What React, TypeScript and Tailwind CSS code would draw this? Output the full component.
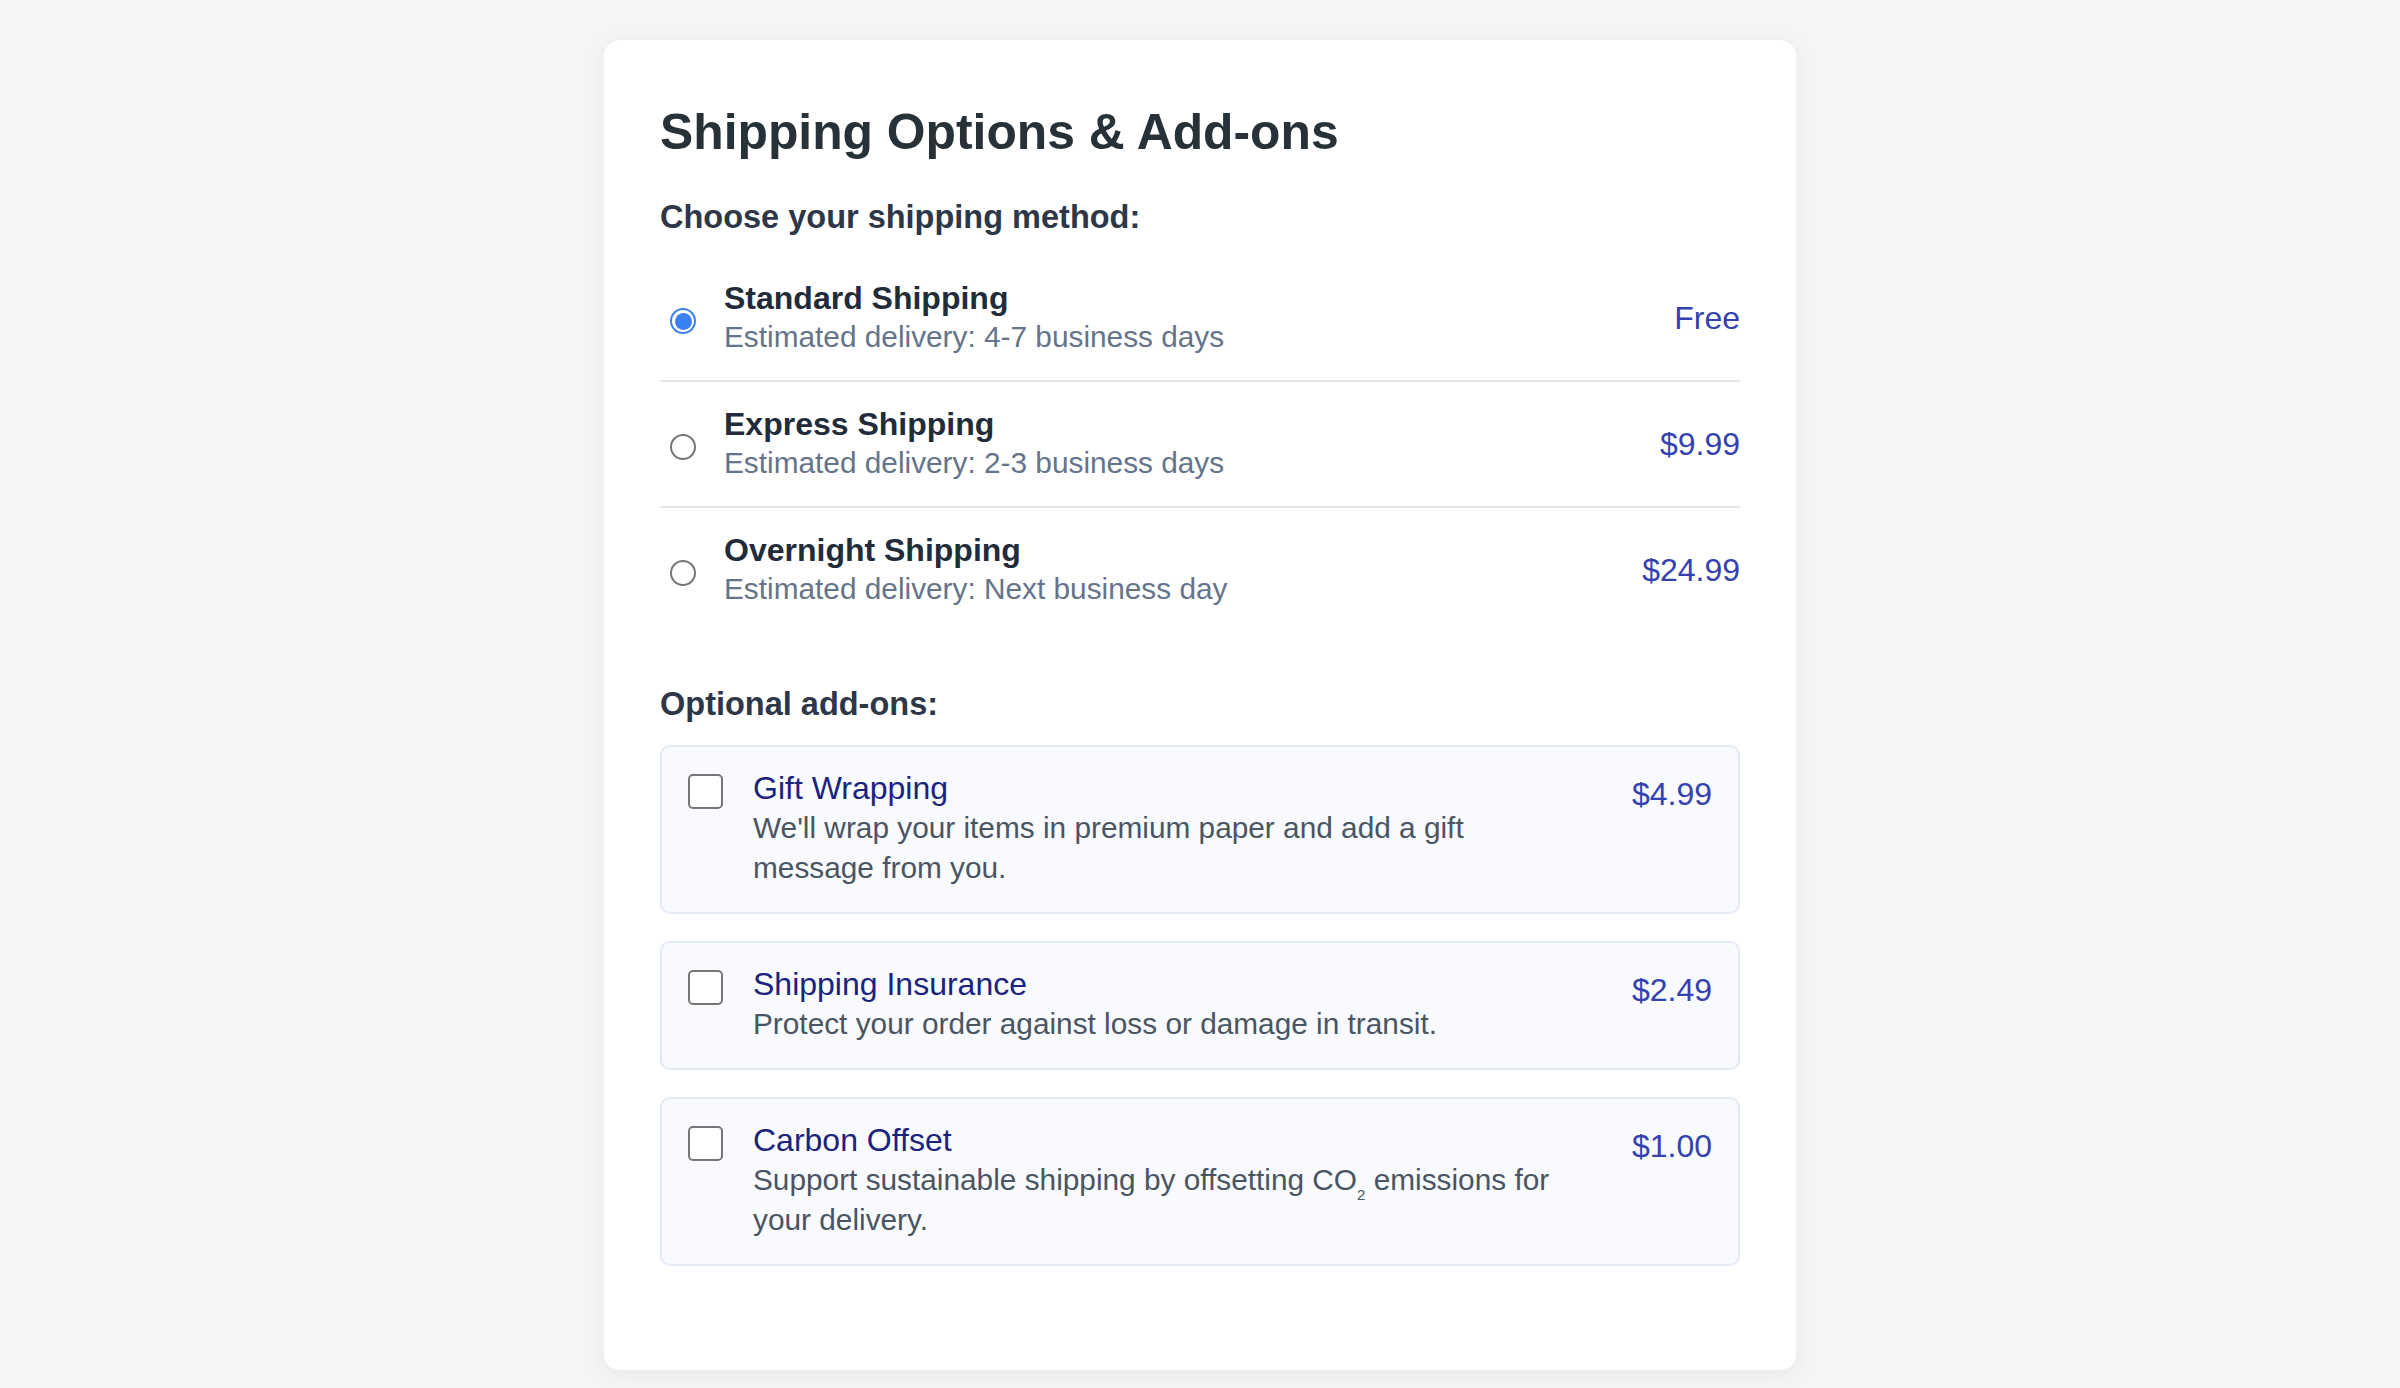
import React from "react";

const FONT = { fontFamily: '"Liberation Sans", Arial, Helvetica, sans-serif' };

type Ship = { name: string; desc: string; price: string; checked?: boolean };

const shipping: Ship[] = [
  { name: "Standard Shipping", desc: "Estimated delivery: 4-7 business days", price: "Free", checked: true },
  { name: "Express Shipping", desc: "Estimated delivery: 2-3 business days", price: "$9.99" },
  { name: "Overnight Shipping", desc: "Estimated delivery: Next business day", price: "$24.99" },
];

function Radio({ checked }: { checked?: boolean }) {
  return checked ? (
    <span className="ml-[10px] mt-[6px] mr-[28px] flex h-[26px] w-[26px] shrink-0 items-center justify-center rounded-full border-2 border-[#3b7ff5] bg-white">
      <span className="h-[17px] w-[17px] rounded-full bg-[#3b7ff5]" />
    </span>
  ) : (
    <span className="ml-[10px] mt-[6px] mr-[28px] block h-[26px] w-[26px] shrink-0 rounded-full border-2 border-[#767676] bg-white" />
  );
}

function Checkbox() {
  return (
    <span className="mt-[5px] mr-[30px] block h-[35px] w-[35px] shrink-0 rounded-[5px] border-2 border-[#767676] bg-white" />
  );
}

function AddOn({ name, desc, price }: { name: string; desc: React.ReactNode; price: string }) {
  return (
    <div className="flex items-start rounded-[10px] border-2 border-[#e3e9f1] bg-[#f8fafd] px-[26px] pt-[22px] pb-[24px]">
      <Checkbox />
      <div className="min-w-0 flex-1">
        <div className="text-[32px] leading-[38px] text-[#1a237e]">{name}</div>
        <div className="mt-[1px] text-[29.8px] leading-[40px] text-[#4a5563]">{desc}</div>
      </div>
      <div className="ml-[48px] mt-[6px] shrink-0 text-[32px] leading-[38px] text-[#3342b0]">{price}</div>
    </div>
  );
}

export default function App() {
  return (
    <div className="min-h-[1388px] w-full bg-[#f5f5f5] pt-[40px] pb-[19px]" style={FONT}>
      <div className="mx-auto w-[1192px] rounded-[16px] bg-white px-[56px] pt-[63px] pb-[104px] shadow-[0_4px_24px_rgba(0,0,0,0.06)]">
        <h1 className="text-[49.8px] font-bold leading-[59px] text-[#263238]">Shipping Options &amp; Add-ons</h1>

        <h2 className="mt-[36px] mb-[20px] text-[32.5px] font-bold leading-[38px] text-[#2d3748]">
          Choose your shipping method:
        </h2>

        <div className="flex flex-col">
          {shipping.map((s, i) => (
            <div
              key={s.name}
              className={
                i < shipping.length - 1
                  ? "flex items-center border-b-2 border-[#e6e6e6] pt-[23px] pb-[23px]"
                  : "flex items-center pt-[23px] pb-[23px]"
              }
            >
              <Radio checked={s.checked} />
              <div className="flex-1">
                <div className="text-[32px] font-bold leading-[38px] text-[#212b3a]">{s.name}</div>
                <div className="text-[29.8px] leading-[40px] text-[#64748b]">{s.desc}</div>
              </div>
              <div className="text-[32px] leading-[38px] text-[#3342b0]">{s.price}</div>
            </div>
          ))}
        </div>

        <h2 className="mt-[53px] mb-[22px] text-[32.5px] font-bold leading-[38px] text-[#2d3748]">
          Optional add-ons:
        </h2>

        <div className="flex flex-col gap-[27px]">
          <AddOn
            name="Gift Wrapping"
            desc="We'll wrap your items in premium paper and add a gift message from you."
            price="$4.99"
          />
          <AddOn
            name="Shipping Insurance"
            desc="Protect your order against loss or damage in transit."
            price="$2.49"
          />
          <AddOn
            name="Carbon Offset"
            desc={
              <>
                Support sustainable shipping by offsetting CO
                <sub className="-bottom-[10px] text-[15px]">2</sub> emissions for your delivery.
              </>
            }
            price="$1.00"
          />
        </div>
      </div>
    </div>
  );
}
